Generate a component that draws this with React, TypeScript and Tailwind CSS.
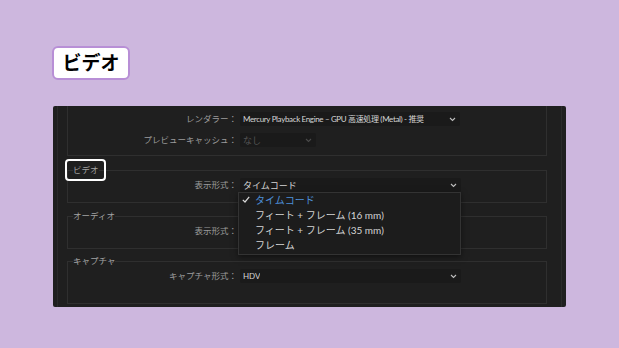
import React from 'react';

const font = "font-['Lato','Noto_Sans_CJK_JP',sans-serif]";

function Chevron({ dim }: { dim?: boolean }) {
  return (
    <svg width="7" height="5" viewBox="0 0 7 5" className="shrink-0">
      <polyline
        points="1,1 3.5,3.5 6,1"
        fill="none"
        stroke={dim ? '#4a4a4a' : '#bdbdbd'}
        strokeWidth="1.1"
      />
    </svg>
  );
}

function Select({
  value,
  width,
  disabled,
  textClass,
  children,
}: {
  value: string;
  width: string;
  disabled?: boolean;
  textClass?: string;
  children?: React.ReactNode;
}) {
  return (
    <div className={`relative h-[14px] ${width}`}>
      <div className="flex h-full items-center justify-between rounded-[2px] bg-[#1a1a1a] pl-[3px] pr-[4px]">
        <span
          className={`truncate leading-none ${textClass ?? 'text-[9px]'} ${disabled ? 'text-[#555]' : 'text-[#d6d6d6]'}`}
        >
          {value}
        </span>
        <Chevron dim={disabled} />
      </div>
      {children}
    </div>
  );
}

function Row({ label, children }: { label: string; children: React.ReactNode }) {
  return (
    <div className="flex h-[14px] items-center">
      <div className="w-[169px] text-right text-[8.5px] leading-none text-[#9c9c9c]">{label}</div>
      <div className="ml-[3px]">{children}</div>
    </div>
  );
}

function Group({
  title,
  highlight,
  className,
  children,
}: {
  title: string;
  highlight?: boolean;
  className?: string;
  children: React.ReactNode;
}) {
  return (
    <fieldset className={`border border-[#2f2f2f] px-0 ${className ?? 'pb-[10px]'}`}>
      <legend className="ml-[5px] px-0">
        <span className="relative block h-[12px] text-[8.5px] leading-[12px] text-[#a3a3a3]">
          {title}
          {highlight && (
            <span className="absolute -top-[5px] -bottom-[5px] -left-[8px] -right-[7px] rounded-[4px] border-2 border-white" />
          )}
        </span>
      </legend>
      <div className="mt-[2px]">{children}</div>
    </fieldset>
  );
}

const menuItems = ['タイムコード', 'フィート + フレーム (16 mm)', 'フィート + フレーム (35 mm)', 'フレーム'];

export default function App() {
  return (
    <div className={`flex h-[348px] w-[619px] flex-col bg-[#cdb7de] ${font}`}>
      <div className="ml-[52px] mt-[46px] flex h-[34px] w-[78px] items-center justify-center rounded-[6px] border-2 border-[#b88fd6] bg-white text-[19px] font-bold text-black">
        ビデオ
      </div>

      <div className="ml-[53px] mt-[26px] h-[201px] w-[513px] overflow-hidden rounded-[2px] bg-[#1f1f1f] px-[4px]">
        <div className="h-full border-x border-[#2a2a2a] pl-[9px] pr-[14px]">
          <div className="w-[480px]">
            <div className="flex h-[50px] flex-col gap-[7px] border-x border-b border-[#2f2f2f] pt-[6px]">
              <Row label="レンダラー：">
                <Select
                  value="Mercury Playback Engine – GPU 高速処理 (Metal) - 推奨"
                  width="w-[220px]"
                  textClass="text-[8px] tracking-[-0.35px]"
                />
              </Row>
              <Row label="プレビューキャッシュ：">
                <Select value="なし" width="w-[76px]" disabled />
              </Row>
            </div>

            <Group title="ビデオ" highlight className="relative z-10 mt-[8px] pb-[10px]">
              <Row label="表示形式：">
                <Select value="タイムコード" width="w-[221px]">
                  <div className="absolute left-[-2px] top-[14px] w-[223px] border border-[#333] bg-[#1c1c1c] pb-[1px] shadow-[0_2px_6px_rgba(0,0,0,0.5)]">
                    {menuItems.map((item, i) => (
                      <div key={item} className="flex h-[15px] items-center pb-[2px] pl-[3px]">
                        <span className="flex w-[13px] items-center">
                          {i === 0 && (
                            <svg width="8" height="7" viewBox="0 0 8 7">
                              <polyline points="0.8,3.8 3,6 7.2,0.8" fill="none" stroke="#d8d8d8" strokeWidth="1.2" />
                            </svg>
                          )}
                        </span>
                        <span className={`text-[10px] leading-none ${i === 0 ? 'text-[#4d8fd8]' : 'text-[#d4d4d4]'}`}>
                          {item}
                        </span>
                      </div>
                    ))}
                  </div>
                </Select>
              </Row>
            </Group>

            <Group title="オーディオ" className="mt-[7px] pb-[10px]">
              <Row label="表示形式：">
                <Select value="" width="w-[221px]" />
              </Row>
            </Group>

            <Group title="キャプチャ" className="mt-[6px] pb-[20px]">
              <Row label="キャプチャ形式：">
                <Select value="HDV" width="w-[221px]" textClass="text-[8px]" />
              </Row>
            </Group>
          </div>
        </div>
      </div>
    </div>
  );
}
